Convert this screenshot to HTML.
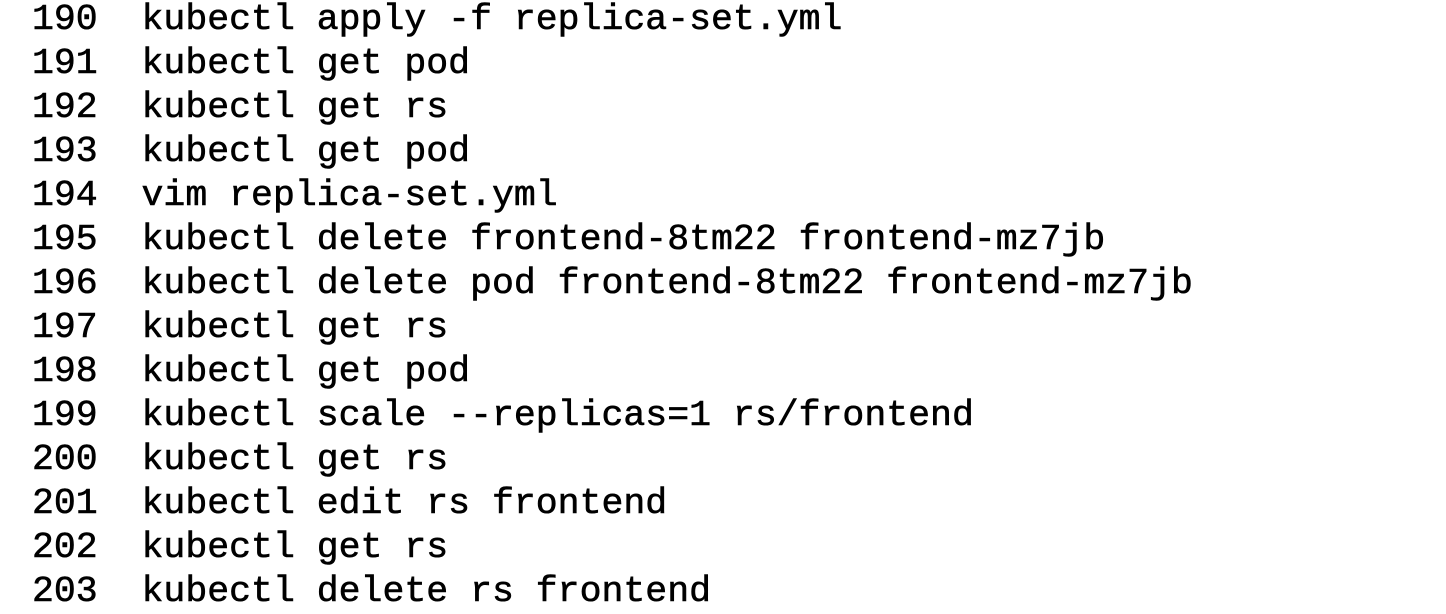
<!DOCTYPE html>
<html><head><meta charset="utf-8"><style>
html,body{margin:0;padding:0;background:#fff;width:1446px;height:608px;overflow:hidden}
pre{margin:0;position:absolute;left:32px;top:-2px;font-family:"Liberation Mono","DejaVu Sans Mono",monospace;font-size:36.5px;line-height:44px;color:#000;white-space:pre;-webkit-text-stroke:0.6px #000}
</style></head><body><pre>190  kubectl apply -f replica-set.yml
191  kubectl get pod
192  kubectl get rs
193  kubectl get pod
194  vim replica-set.yml
195  kubectl delete frontend-8tm22 frontend-mz7jb
196  kubectl delete pod frontend-8tm22 frontend-mz7jb
197  kubectl get rs
198  kubectl get pod
199  kubectl scale --replicas=1 rs/frontend
200  kubectl get rs
201  kubectl edit rs frontend
202  kubectl get rs
203  kubectl delete rs frontend</pre></body></html>
